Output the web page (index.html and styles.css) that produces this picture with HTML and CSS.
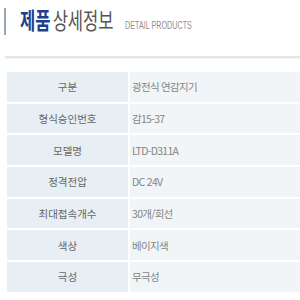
FILE: index.html
```html
<!DOCTYPE html>
<html lang="ko">
<head>
<meta charset="utf-8">
<link rel="stylesheet" href="styles.css">
</head>
<body>
<div class="page">
  <div class="header">
    <div class="title">
      <span class="strong">제품</span><span class="rest">상세정보</span><span class="eng">DETAIL PRODUCTS</span>
    </div>
  </div>
  <div class="rule"></div>
  <div class="spec">
    <div class="k">구분</div><div class="v">광전식 연감지기</div>
    <div class="k">형식승인번호</div><div class="v">감15-37</div>
    <div class="k">모델명</div><div class="v">LTD-D311A</div>
    <div class="k">정격전압</div><div class="v">DC 24V</div>
    <div class="k">최대접속개수</div><div class="v">30개/회선</div>
    <div class="k">색상</div><div class="v">베이지색</div>
    <div class="k">극성</div><div class="v">무극성</div>
  </div>
</div>
</body>
</html>
```
FILE: styles.css
```css
html, body {
  margin: 0;
  padding: 0;
  background: #ffffff;
}
.page {
  width: 300px;
  height: 300px;
  overflow: hidden;
  font-family: "Noto Sans CJK KR", "Noto Sans", sans-serif;
}
.header {
  margin-top: 8px;
  margin-left: 4px;
  height: 27px;
  border-left: 2px solid #9aa6bb;
  display: flex;
  align-items: center;
  padding-left: 14px;
}
.title {
  display: flex;
  align-items: baseline;
  white-space: nowrap;
  transform: scaleX(0.72);
  transform-origin: left center;
  line-height: 27px;
  padding-top: 2px;
}
.strong {
  font-size: 23px;
  font-weight: 700;
  color: #1f3f8e;
}
.rest {
  font-size: 23px;
  font-weight: 400;
  color: #555555;
  margin-left: 3px;
}
.eng {
  font-family: "Liberation Sans", Arial, sans-serif;
  font-size: 10px;
  color: #8e8e8e;
  margin-left: 16px;
}
.rule {
  margin-top: 21px;
  margin-left: 5px;
  height: 2px;
  background: #e6e6e6;
  box-shadow: 0 1px 1px #f4f4f4;
}
.spec {
  margin-top: 14px;
  margin-left: 7px;
  display: grid;
  grid-template-columns: 121px 1fr;
  grid-auto-rows: 29.67px;
  column-gap: 2px;
  row-gap: 2px;
}
.k {
  background: #e7eef4;
  color: #666666;
  font-size: 10.5px;
  display: flex;
  align-items: center;
  justify-content: center;
}
.v {
  background: #f1f5f8;
  color: #858585;
  font-size: 10.5px;
  letter-spacing: -0.7px;
  display: flex;
  align-items: center;
  padding-left: 2px;
}
```
